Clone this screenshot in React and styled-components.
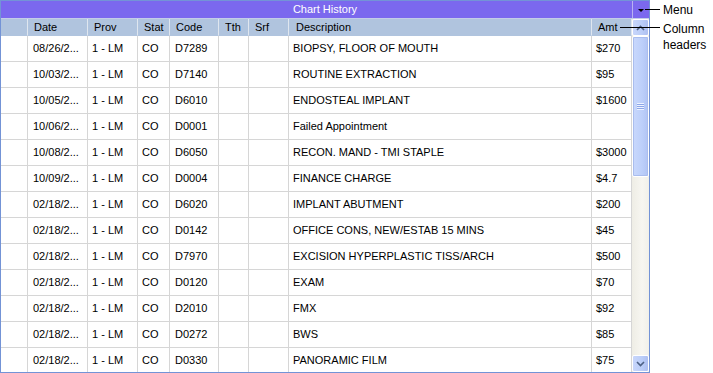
import styled, { createGlobalStyle } from 'styled-components'

const GlobalStyle = createGlobalStyle`
    html, body {
        margin: 0;
        padding: 0;
        background: #ffffff;
    }
    body {
        font-family: "Liberation Sans", Arial, sans-serif;
    }
`

const COLS = '27px 60px 50px 32px 49px 30px 40px 303px 40px'

const rows = [
    ['08/26/2...', 'D7289', 'BIOPSY, FLOOR OF MOUTH', '$270'],
    ['10/03/2...', 'D7140', 'ROUTINE EXTRACTION', '$95'],
    ['10/05/2...', 'D6010', 'ENDOSTEAL IMPLANT', '$1600'],
    ['10/06/2...', 'D0001', 'Failed Appointment', ''],
    ['10/08/2...', 'D6050', 'RECON. MAND - TMI STAPLE', '$3000'],
    ['10/09/2...', 'D0004', 'FINANCE CHARGE', '$4.7'],
    ['02/18/2...', 'D6020', 'IMPLANT ABUTMENT', '$200'],
    ['02/18/2...', 'D0142', 'OFFICE CONS, NEW/ESTAB 15 MINS', '$45'],
    ['02/18/2...', 'D7970', 'EXCISION HYPERPLASTIC TISS/ARCH', '$500'],
    ['02/18/2...', 'D0120', 'EXAM', '$70'],
    ['02/18/2...', 'D2010', 'FMX', '$92'],
    ['02/18/2...', 'D0272', 'BWS', '$85'],
    ['02/18/2...', 'D0330', 'PANORAMIC FILM', '$75'],
]

const Page = styled.div`
    position: relative;
    display: flex;
    width: 713px;
    height: 373px;
    overflow: hidden;
`

const Frame = styled.div`
    width: 648px;
    height: 371px;
    border: 1px solid #7393d6;
    display: flex;
    flex-direction: column;
    overflow: hidden;
`

const TitleBar = styled.div`
    display: flex;
    height: 17px;
    background: #7b68ee;
    border-bottom: 1px solid #c4cde8;
    flex-shrink: 0;
`

const Title = styled.div`
    flex: 1;
    padding-left: 17px;
    text-align: center;
    color: #ffffff;
    font-size: 11px;
    line-height: 16px;
`

const MenuCell = styled.div`
    width: 16px;
    border-left: 1px solid #b9b2f2;
    display: flex;
    justify-content: center;
    align-items: center;
    &::after{
        content: '';
        border-left: 3px solid transparent;
        border-right: 3px solid transparent;
        border-top: 3px solid #000;
        margin-top: 1px;
    }
`

const Body = styled.div`
    flex: 1;
    display: flex;
    min-height: 0;
`

const Table = styled.div`
    width: 631px;
    display: flex;
    flex-direction: column;
    overflow: hidden;
`

const Row = styled.div`
    display: grid;
    grid-template-columns: ${COLS};
    height: ${p => p.$head ? '17px' : '26px'};
    flex-shrink: 0;
    background: ${p => p.$head ? '#b0c4de' : '#ffffff'};
`

const Cell = styled.div`
    box-sizing: border-box;
    border-right: 1px solid ${p => p.$head ? '#dfe6ef' : '#d6d6d6'};
    border-bottom: 1px solid ${p => p.$head ? 'transparent' : '#d6d6d6'};
    padding-left: ${p => p.$pad ?? 5}px;
    font-size: 11px;
    color: #000;
    line-height: ${p => p.$head ? '16px' : '25px'};
    white-space: nowrap;
    overflow: hidden;
`

const ScrollBar = styled.div`
    width: 17px;
    display: flex;
    flex-direction: column;
    background: linear-gradient(to right, #eeede5, #f7f6f1 60%, #f1f0ea);
`

const ScrollButton = styled.div`
    height: 17px;
    flex-shrink: 0;
    box-sizing: border-box;
    border: 1px solid #ffffff;
    border-radius: 2px;
    background: linear-gradient(to right, #c8d6fb, #bacdf8 60%, #aebff0);
    display: flex;
    justify-content: center;
    align-items: center;
    color: #4d6185;
`

const Thumb = styled.div`
    height: 141px;
    flex-shrink: 0;
    box-sizing: border-box;
    border: 1px solid #ffffff;
    outline: 1px solid #a9bdee;
    outline-offset: -2px;
    border-radius: 2px;
    background: linear-gradient(to right, #c9d8fc, #bccffa 60%, #b1c4f4);
    display: flex;
    justify-content: center;
    align-items: center;
`

const Grip = styled.div`
    width: 7px;
    height: 7px;
    background: repeating-linear-gradient(to bottom, #eef3ff 0 1px, #8ca6e8 1px 2px);
`

const Track = styled.div`
    flex: 1;
`

const Callouts = styled.div`
    display: flex;
    flex-direction: column;
    padding: 2px 0 0 13px;
    font-size: 12px;
    line-height: 16px;
    color: #000;
`

const CalloutLabel = styled.div`
    margin-bottom: ${p => p.$gap ?? 0}px;
`

const Leader = styled.div`
    position: absolute;
    height: 1px;
    background: #000;
    left: ${p => p.$x}px;
    top: ${p => p.$y}px;
    width: ${p => p.$w}px;
`

function Chevron({up}) {
    return (
        <svg width="9" height="6" viewBox="0 0 9 6">
            <path d={up ? 'M1 5 L4.5 1.5 L8 5' : 'M1 1 L4.5 4.5 L8 1'} fill="none" stroke="#4d6185" strokeWidth="1.6" />
        </svg>
    )
}

export default function App() {
    const headers = ['', 'Date', 'Prov', 'Stat', 'Code', 'Tth', 'Srf', 'Description', 'Amt']
    return (
        <>
            <GlobalStyle />
            <Page>
                <Frame>
                    <TitleBar>
                        <Title>Chart History</Title>
                        <MenuCell />
                    </TitleBar>
                    <Body>
                        <Table>
                            <Row $head>
                                {headers.map((h, i) => (
                                    <Cell $head key={i} $pad={i === 7 ? 7 : 6}>{h}</Cell>
                                ))}
                            </Row>
                            {rows.map((r, i) => (
                                <Row key={i}>
                                    <Cell />
                                    <Cell>{r[0]}</Cell>
                                    <Cell $pad={4}>1 - LM</Cell>
                                    <Cell $pad={4}>CO</Cell>
                                    <Cell $pad={5}>{r[1]}</Cell>
                                    <Cell />
                                    <Cell />
                                    <Cell $pad={4}>{r[2]}</Cell>
                                    <Cell $pad={4}>{r[3]}</Cell>
                                </Row>
                            ))}
                        </Table>
                        <ScrollBar>
                            <ScrollButton><Chevron up /></ScrollButton>
                            <Thumb><Grip /></Thumb>
                            <Track />
                            <ScrollButton><Chevron /></ScrollButton>
                        </ScrollBar>
                    </Body>
                </Frame>
                <Callouts>
                    <CalloutLabel $gap={3}>Menu</CalloutLabel>
                    <CalloutLabel>Column</CalloutLabel>
                    <CalloutLabel>headers</CalloutLabel>
                </Callouts>
                <Leader $x={645} $y={9} $w={15} />
                <Leader $x={620} $y={27} $w={40} />
            </Page>
        </>
    )
}
